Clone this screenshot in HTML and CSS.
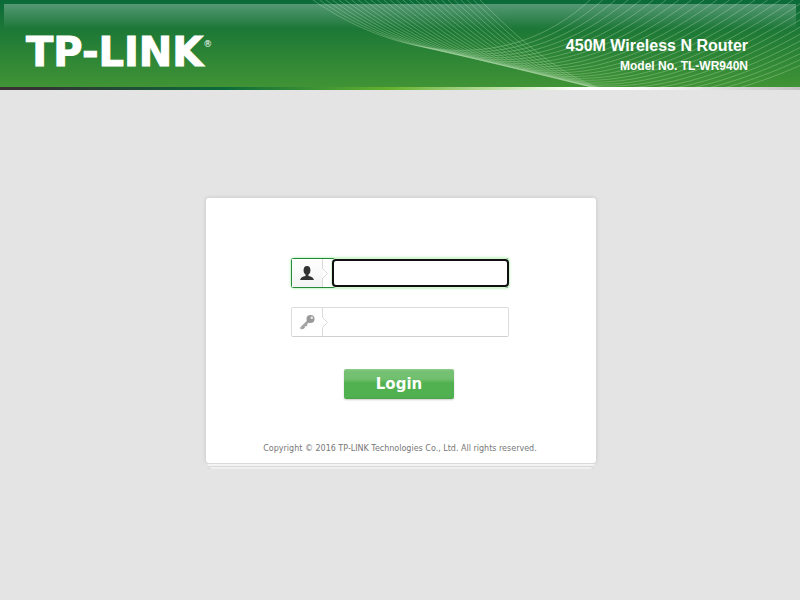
FILE: index.html
```html
<!DOCTYPE html>
<html lang="en">
<head>
<meta charset="utf-8">
<title>TL-WR940N</title>
<link rel="stylesheet" href="styles.css">
</head>
<body>
<header class="banner">
  <svg class="waves" id="waves" width="900" height="87" viewBox="0 0 900 87" aria-hidden="true"></svg>
  <div class="gloss"></div>
  <div class="logo">TP-LINK<sup class="mark">®</sup></div>
  <div class="product">
    <h1 class="product-name">450M Wireless N Router</h1>
    <p class="product-model">Model No. TL-WR940N</p>
  </div>
</header>
<main class="page">
  <div class="panel">
    <form class="card">
      <div class="field field-active">
        <label class="field-icon" for="user" aria-label="User name">
          <svg width="42" height="28" viewBox="0 0 42 28" aria-hidden="true">
            <path fill="#fff" d="M31 0h11v28H31z"/>
            <path class="divider" d="M30.5 0V9.500L35.500 14.500L30.500 19.500V28"/>
            <ellipse cx="15" cy="11.200" rx="3.400" ry="4.300" fill="#333"/>
            <path fill="#333" d="M13.500 14h3v3q4.500.4 5.500 4H8q1-3.600 5.500-4z"/>
          </svg>
        </label>
        <input class="field-input" id="user" type="text">
      </div>
      <div class="field">
        <label class="field-icon" for="pass" aria-label="Password">
          <svg width="42" height="28" viewBox="0 0 42 28" aria-hidden="true">
            <path class="divider" d="M30.5 0V9.500L35.500 14.500L30.500 19.500V28"/>
            <path d="M16.500 13L9.500 20" stroke="#a6a6a6" stroke-width="2.600" stroke-linecap="round"/>
            <path d="M11 20.500l1.500-1.500M13.500 18l1.500-1.500" stroke="#999" stroke-width="1.500"/>
            <circle cx="18.500" cy="11" r="4" fill="#999"/>
            <circle cx="19.800" cy="9.800" r="1.200" fill="#eee"/>
          </svg>
        </label>
        <input class="field-input" id="pass" type="password">
      </div>
      <button class="login" type="button">Login</button>
      <p class="copyright">Copyright © 2016 TP-LINK Technologies Co., Ltd. All rights reserved.</p>
    </form>
    <div class="sheet"></div>
    <div class="sheet sheet-last"></div>
  </div>
</main>
<script src="waves.js"></script>
</body>
</html>
```
FILE: styles.css
```css
* {
  box-sizing: border-box;
}

body {
  margin: 0;
  background: #e4e4e4;
  font-family: Verdana, "DejaVu Sans", sans-serif;
}

.banner {
  position: relative;
  display: flex;
  justify-content: space-between;
  height: 90px;
  padding: 0 52px 0 26px;
  overflow: hidden;
  background:
    linear-gradient(90deg, #3a3035 0, #333 5%, #0b6b3a 28%, #66b32e 49%, #fff 72%, #fff 78%, #c4c4c4 100%) bottom / 100% 3px no-repeat,
    linear-gradient(#0a6b39 0, #1d7836 30px, #409435 87px);
  color: #fff;
}

.waves {
  position: absolute;
  top: 0;
  left: 0;
  fill: none;
  stroke: #b9e0b4;
  stroke-opacity: 0.34;
  stroke-width: 1;
}

.gloss {
  position: absolute;
  top: 4px;
  right: 4px;
  left: 4px;
  height: 25px;
  background: linear-gradient(rgba(255, 255, 255, 0.3), rgba(255, 255, 255, 0));
}

.logo {
  position: relative;
  display: flex;
  padding-top: 32px;
  font-size: 40px;
  font-weight: bold;
  line-height: 40px;
  -webkit-text-stroke: 1px #fff;
}

.mark {
  padding-top: 6px;
  font-size: 9px;
  font-weight: normal;
  line-height: 12px;
  -webkit-text-stroke: 0;
}

.product {
  position: relative;
  padding-top: 36px;
  font-family: "Liberation Sans", Arial, sans-serif;
  text-align: right;
}

.product-name {
  margin: 0;
  font-size: 16px;
  line-height: 20px;
}

.product-model {
  margin: 0;
  font-size: 12px;
  font-weight: bold;
  line-height: 20px;
}

.page {
  padding: 108px 16px 0;
}

.panel {
  position: relative;
  left: 1px;
  max-width: 390px;
  margin: 0 auto;
}

.card {
  display: flex;
  flex-direction: column;
  align-items: center;
  padding: 60px 2px 7px 0;
  border-radius: 3px;
  background: #fff;
  box-shadow: 0 0 4px rgba(0, 0, 0, 0.14);
}

.field {
  display: flex;
  width: 218px;
  height: 30px;
  margin: 0 0 19px;
  overflow: hidden;
  border: 1px solid #dcdcdc;
  border-bottom-color: #d0d0d0;
  border-radius: 2px;
}

.field-active {
  border-color: #26883a #c4f2c4 #26883a #26883a;
  box-shadow: 0 0 3px #8fec8f;
  overflow: visible;
  border-radius: 3px;
}

.field-icon {
  flex: none;
  width: 40px;
  height: 28px;
}

.field-icon svg {
  display: block;
  fill: none;
}

.field-active .field-icon {
  background: linear-gradient(#fff, #f3f3f3);
}

.divider {
  fill: none;
  stroke: #dadada;
}

.field-input {
  flex: 1;
  min-width: 0;
  padding: 0 6px;
  border: 0;
  outline: 0;
  background: #fff;
  font-size: 14px;
}

.field-active .field-input {
  position: relative;
  margin-right: -1px;
  border: 2px solid #101010;
  border-radius: 4px;
  box-shadow: 0 0 0 1px #d5f5d5;
}

.login {
  width: 110px;
  height: 30px;
  margin: 13px 2px 0 0;
  padding: 0;
  border: 0;
  border-radius: 2px;
  background: linear-gradient(#8fcd8d 0, #76c174 2px, #70bf6e 10px, #51b04f 14px, #51b04f 28px, #48a447 30px);
  box-shadow: 0 1px 2px rgba(0, 0, 0, 0.2);
  color: #fff;
  font-family: Verdana, "DejaVu Sans", sans-serif;
  font-size: 15px;
  font-weight: bold;
  line-height: 28px;
}

.copyright {
  margin: 43px 0 0;
  color: #777;
  font-size: 8px;
  line-height: 14px;
  white-space: nowrap;
}

.sheet {
  height: 3px;
  margin: 0 1px;
  border-top: 1px solid #dadada;
  border-radius: 0 0 3px 3px;
  background: #f6f6f6;
}

.sheet-last {
  margin: 0 3px;
  background: #efefef;
  box-shadow: 0 1px 3px rgba(0, 0, 0, 0.15);
}
```
FILE: waves.js
```js
const waves = document.getElementById("waves");
const strands = 27;
const mix = (a, b, t) => Math.round((a + (b - a) * t) * 10) / 10;

for (let i = 0; i < strands; i++) {
  const t = i / (strands - 1);
  const path = document.createElementNS("http://www.w3.org/2000/svg", "path");
  path.setAttribute("d",
    `M${mix(313, 480, t)} 0` +
    `C${mix(400, 575, t)} ${mix(60, 95, t)} ` +
    `${mix(510, 660, t)} ${mix(74, 165, t)} ` +
    `${mix(590, 920, t)} 0`);
  waves.appendChild(path);
}
```
